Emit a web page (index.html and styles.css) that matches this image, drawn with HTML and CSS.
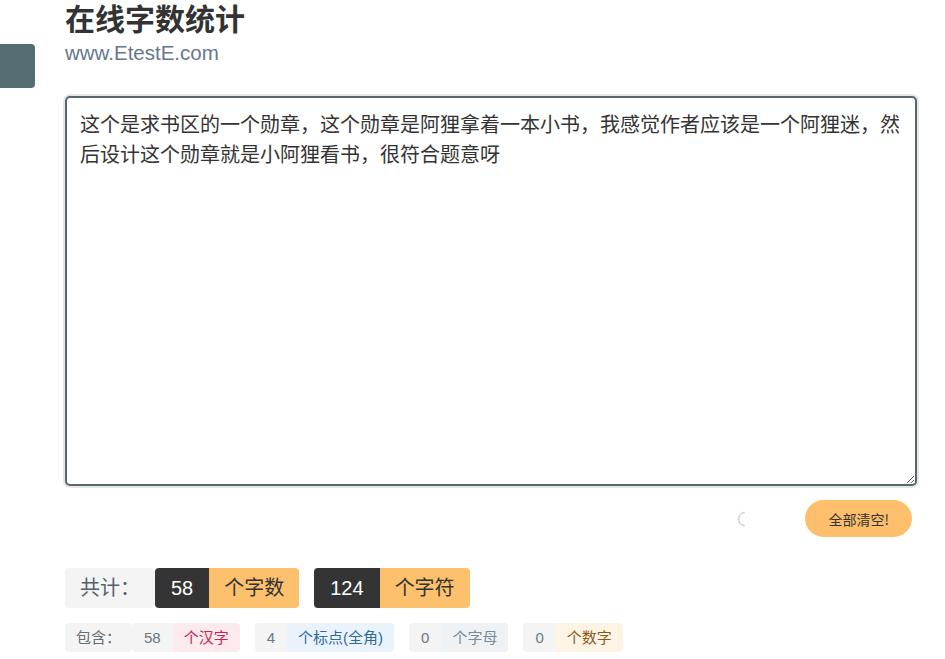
FILE: index.html
```html
<!DOCTYPE html>
<html>
<head>
    <title>在线字数统计</title>
    <link rel="stylesheet" href="styles.css">
</head>
<body>
    <div class="page">
        <div class="side-tab"></div>
        <main class="main">
            <h1 class="title">在线字数统计</h1>
            <p class="site">www.EtestE.com</p>

            <textarea class="input" id="content">这个是求书区的一个勋章，这个勋章是阿狸拿着一本小书，我感觉作者应该是一个阿狸迷，然后设计这个勋章就是小阿狸看书，很符合题意呀</textarea>

            <div class="actions">
                <svg class="spinner" width="16" height="16" viewBox="0 0 16 16">
                    <path d="M9 1.6 A6.5 6.5 0 0 0 9 14.4" fill="none" stroke="#dcdcdc" stroke-width="2" stroke-linecap="round"/>
                </svg>
                <button class="clear-btn" id="clearBtn">全部清空!</button>
            </div>

            <div class="totals">
                <span class="label">共计：</span>
                <div class="stat">
                    <span class="num">58</span>
                    <span class="unit">个字数</span>
                </div>
                <div class="stat">
                    <span class="num">124</span>
                    <span class="unit">个字符</span>
                </div>
            </div>

            <div class="details">
                <span class="label">包含：</span>
                <div class="chip">
                    <span class="count">58</span>
                    <span class="kind kind-han">个汉字</span>
                </div>
                <div class="chip">
                    <span class="count">4</span>
                    <span class="kind kind-punct">个标点(全角)</span>
                </div>
                <div class="chip">
                    <span class="count">0</span>
                    <span class="kind kind-letter">个字母</span>
                </div>
                <div class="chip">
                    <span class="count">0</span>
                    <span class="kind kind-digit">个数字</span>
                </div>
            </div>
        </main>
    </div>
</body>
</html>
```

FILE: styles.css
```css
body { margin: 0; font-family: "Liberation Sans", "Noto Sans CJK SC", sans-serif; color: #333; background: #fff; }
.page { display: flex; align-items: flex-start; }
.side-tab { width: 35px; height: 44px; margin-top: 44px; background: #546e73; border-radius: 0 4px 4px 0; flex-shrink: 0; }
.main { flex: 1; margin: 0 28px 0 30px; }

.title { margin: 0; padding-top: 2px; font-size: 30px; line-height: 36px; font-weight: bold; color: #333; }
.site { margin: 3px 0 0; font-size: 20.5px; line-height: 24px; color: #66778e; }

.input { display: block; width: 100%; height: 390px; margin-top: 31px; box-sizing: border-box; padding: 11px 13px; border: 2px solid #56686d; border-radius: 5px; box-shadow: 0 0 0 2px #e3e9eb; font-family: "Noto Sans CJK SC", sans-serif; font-size: 20px; line-height: 30px; color: #333; outline: none; }

.actions { display: flex; justify-content: flex-end; align-items: center; margin-top: 14px; padding-right: 5px; }
.spinner { margin-right: 54px; }
.clear-btn { height: 37px; padding: 0 23px; border: none; border-radius: 19px; background: #fdbf6b; color: #333; font-family: "Noto Sans CJK SC", sans-serif; font-size: 14px; cursor: pointer; }

.totals { display: flex; margin-top: 31px; height: 40px; line-height: 40px; font-size: 20px; }
.totals .label { padding: 0 15px; background: #f4f4f5; color: #555f6d; border-radius: 4px; }
.stat { display: flex; border-radius: 4px; overflow: hidden; margin-right: 15px; }
.stat .num { padding: 0 16px; background: #343434; color: #fff; }
.stat .unit { padding: 0 15px; background: #fdc06d; color: #333; }

.details { display: flex; margin-top: 15px; height: 29px; line-height: 29px; font-size: 15px; }
.details .label { padding: 0 11px; background: #f4f4f5; color: #666e7a; border-radius: 4px; }
.chip { display: flex; margin-right: 15px; }
.chip .count { padding: 0 12px; background: #f4f4f5; color: #6b7785; border-radius: 4px 0 0 4px; }
.chip .kind { padding: 0 11px; border-radius: 0 4px 4px 0; }
.kind-han { background: #fdeaef; color: #c7264e; }
.kind-punct { background: #eaf3fb; color: #2e6c9c; }
.kind-letter { background: #eef2f4; color: #7d8a94; }
.kind-digit { background: #fef4e6; color: #8a5a1c; }
```
